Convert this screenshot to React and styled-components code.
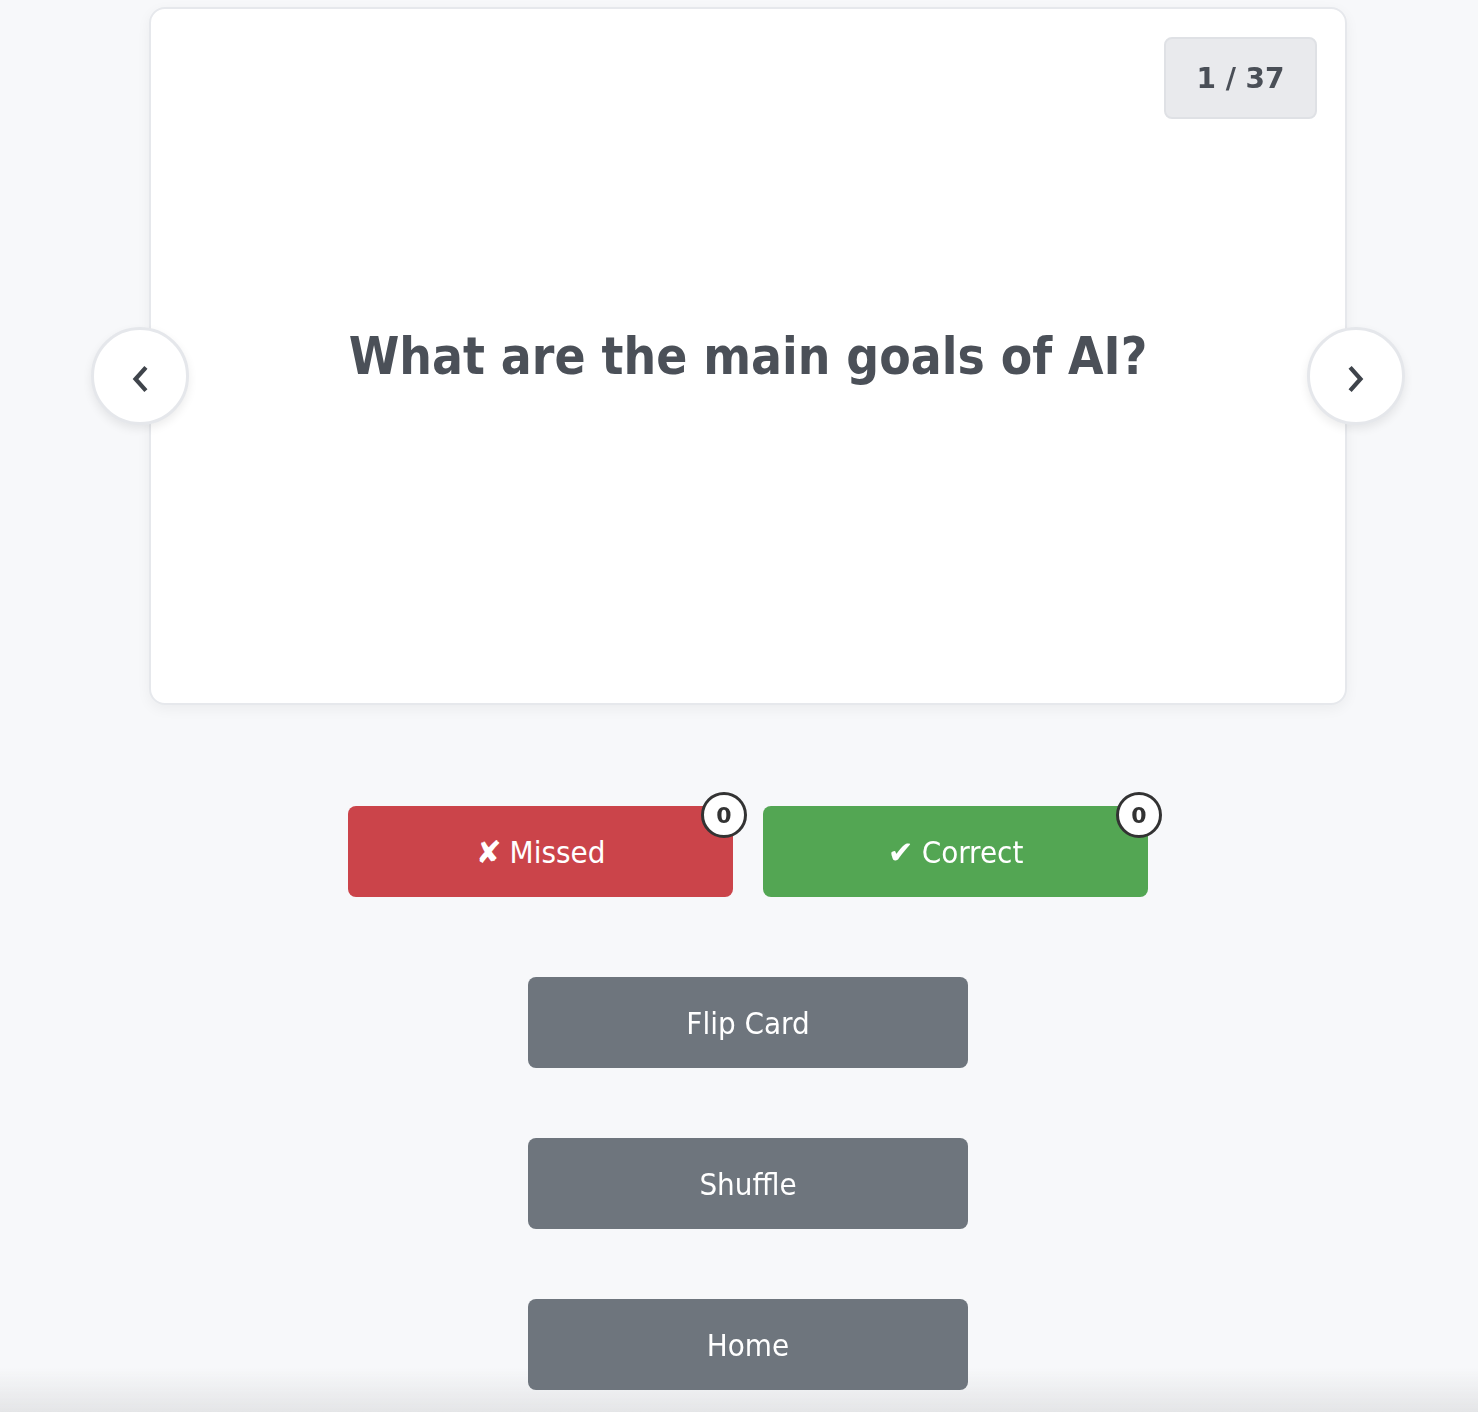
import React from "react";
import styled, { createGlobalStyle } from "styled-components";

const Global = createGlobalStyle`
  html, body { margin: 0; padding: 0; background: #f7f8fa; }
  body { font-family: "DejaVu Sans", Verdana, sans-serif; }
`;

const Page = styled.div`
  position: relative;
  z-index: 1;
  min-height: 1412px;
  box-sizing: border-box;
  padding: 7px 0 0 18px;
  display: flex;
  flex-direction: column;
  align-items: center;
`;

const Stage = styled.div`
  position: relative;
  width: 1198px;
`;

const Card = styled.div`
  box-sizing: border-box;
  height: 698px;
  background: #fff;
  border: 2px solid #e6e8ec;
  border-radius: 16px;
  box-shadow: 0 4px 14px rgba(0, 0, 0, 0.05);
  display: flex;
  align-items: center;
  justify-content: center;
  position: relative;
`;

const Counter = styled.div`
  position: absolute;
  top: 28px;
  right: 28px;
  width: 153px;
  height: 82px;
  box-sizing: border-box;
  background: #e9eaed;
  border: 2px solid #dfe1e5;
  border-radius: 8px;
  display: flex;
  align-items: center;
  justify-content: center;
  font-weight: 700;
  font-size: 28px;
  color: #4a4f57;
`;

const Question = styled.h1`
  margin: 0;
  font-family: "DejaVu Sans Condensed", "DejaVu Sans", sans-serif;
  font-size: 51px;
  font-weight: 700;
  color: #4b5058;
  text-align: center;
`;

const NavButton = styled.button`
  position: absolute;
  top: 320px;
  ${(p) => (p.$side === "left" ? "left: -58px;" : "right: -58px;")}
  width: 98px;
  height: 98px;
  border-radius: 50%;
  background: #fff;
  border: 3px solid #e5e7eb;
  box-shadow: 0 4px 10px rgba(0, 0, 0, 0.08);
  display: flex;
  align-items: center;
  justify-content: center;
  padding: 6px 0 0;
  cursor: pointer;
`;

const ScoreRow = styled.div`
  display: flex;
  gap: 30px;
  margin-top: 101px;
`;

const ScoreButton = styled.button`
  position: relative;
  width: 385px;
  height: 91px;
  border: none;
  border-radius: 8px;
  background: ${(p) => p.$bg};
  color: #fff;
  font-family: "DejaVu Sans Condensed", "DejaVu Sans", sans-serif;
  font-size: 31px;
  display: flex;
  align-items: center;
  justify-content: center;
  gap: 8px;
  cursor: pointer;
`;

const Mark = styled.span`
  font-family: "DejaVu Sans", sans-serif;
  font-size: 31px;
`;

const Badge = styled.span`
  position: absolute;
  top: -14px;
  right: -14px;
  width: 46px;
  height: 46px;
  box-sizing: border-box;
  border-radius: 50%;
  background: #fff;
  border: 3px solid #333;
  color: #333;
  font-family: "DejaVu Sans", sans-serif;
  font-weight: 700;
  font-size: 22px;
  display: flex;
  align-items: center;
  justify-content: center;
`;

const ActionColumn = styled.div`
  display: flex;
  flex-direction: column;
  gap: 70px;
  margin-top: 80px;
`;

const ActionButton = styled.button`
  width: 440px;
  height: 91px;
  border: none;
  border-radius: 8px;
  background: #6e757d;
  color: #fff;
  font-family: "DejaVu Sans Condensed", "DejaVu Sans", sans-serif;
  font-size: 31px;
  cursor: pointer;
`;

const BottomFade = styled.div`
  position: fixed;
  z-index: 0;
  left: 0;
  right: 0;
  bottom: 0;
  height: 44px;
  background: linear-gradient(to bottom, rgba(230, 231, 233, 0), rgba(228, 229, 231, 1));
  pointer-events: none;
`;

const Chevron = ({ dir }) => (
  <svg width="22" height="30" viewBox="0 0 22 30" fill="none">
    <path
      d={dir === "left" ? "M15.5 5 L6.5 15 L15.5 25" : "M6.5 5 L15.5 15 L6.5 25"}
      stroke="#3f444b"
      strokeWidth="4.2"
      strokeLinecap="square"
      strokeLinejoin="miter"
    />
  </svg>
);

export default function App() {
  return (
    <>
      <Global />
      <BottomFade />
      <Page>
        <Stage>
          <Card>
            <Counter>1 / 37</Counter>
            <Question>What are the main goals of AI?</Question>
          </Card>
          <NavButton $side="left" aria-label="Previous">
            <Chevron dir="left" />
          </NavButton>
          <NavButton $side="right" aria-label="Next">
            <Chevron dir="right" />
          </NavButton>
        </Stage>
        <ScoreRow>
          <ScoreButton $bg="#cb444a">
            <Mark>✘</Mark>Missed
            <Badge>0</Badge>
          </ScoreButton>
          <ScoreButton $bg="#53a653">
            <Mark>✔</Mark>Correct
            <Badge>0</Badge>
          </ScoreButton>
        </ScoreRow>
        <ActionColumn>
          <ActionButton>Flip Card</ActionButton>
          <ActionButton>Shuffle</ActionButton>
          <ActionButton>Home</ActionButton>
        </ActionColumn>
      </Page>
    </>
  );
}
